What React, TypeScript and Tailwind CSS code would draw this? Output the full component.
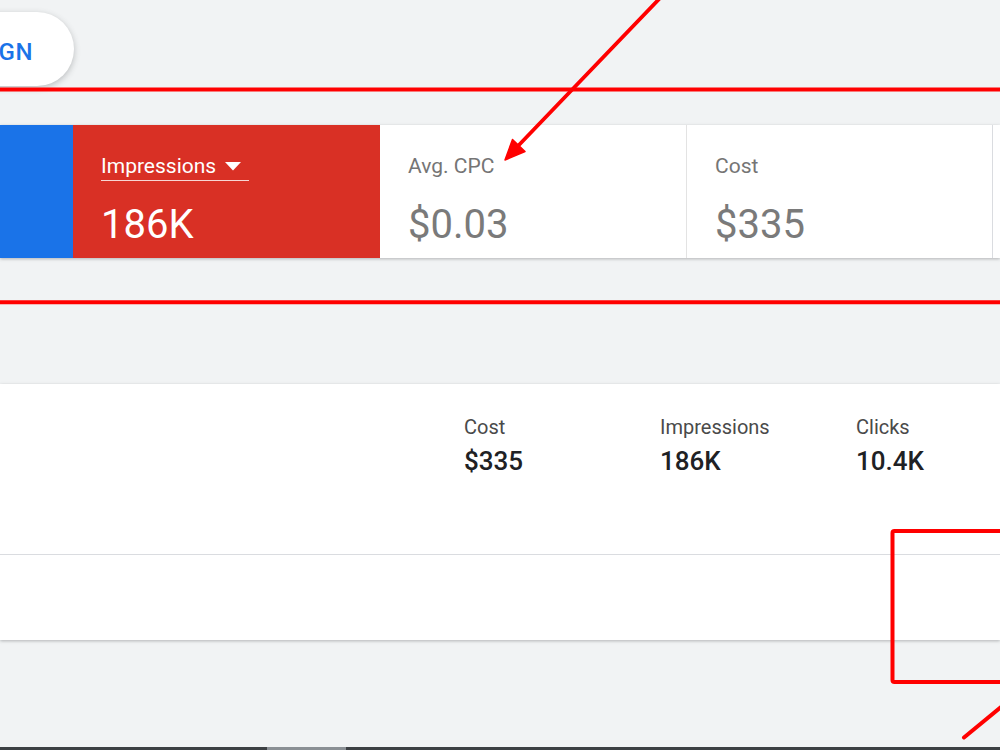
import React from "react";

function Annotations() {
  return (
    <svg
      className="absolute inset-0 pointer-events-none"
      width={1000}
      height={750}
      viewBox="0 0 1000 750"
    >
      <line x1={0} y1={89.5} x2={1000} y2={89.5} stroke="#ff0000" strokeWidth={4} />
      <line x1={0} y1={302.3} x2={1000} y2={302.3} stroke="#ff0000" strokeWidth={4} />
      <line x1={662} y1={-4} x2={518} y2={146} stroke="#ff0000" strokeWidth={3.8} strokeLinecap="round" />
      <polygon points="505,160 512.5,139.5 525,151.5" fill="#ff0000" stroke="#ff0000" strokeWidth={1.5} strokeLinejoin="round" />
      <rect x={892.5} y={531} width={200} height={151} rx={2} fill="none" stroke="#ff0000" strokeWidth={4} />
      <line x1={964} y1={737.5} x2={1012} y2={698} stroke="#ff0000" strokeWidth={4} strokeLinecap="round" />
    </svg>
  );
}

function Tile({
  label,
  value,
  className,
  labelClass,
  valueClass,
  underline,
}: {
  label: string;
  value: string;
  className: string;
  labelClass: string;
  valueClass: string;
  underline?: boolean;
}) {
  return (
    <div className={`shrink-0 pt-[27px] pl-[28px] ${className}`}>
      <div
        className={`inline-flex items-center text-[21px] leading-[28px] ${labelClass} ${
          underline ? "border-b border-white/80 w-[148px]" : "border-b border-transparent"
        }`}
      >
        <span>{label}</span>
        {underline && (
          <svg width={16} height={9} viewBox="0 0 16 9" className="ml-[9px] mt-[1px]">
            <polygon points="0,0 16,0 8,8.5" fill="#ffffff" />
          </svg>
        )}
      </div>
      <div className={`mt-[21px] text-[40px] leading-[46px] ${valueClass}`}>{value}</div>
    </div>
  );
}

function Stat({ label, value }: { label: string; value: string }) {
  return (
    <div className="w-[196px] shrink-0">
      <div className="text-[20px] leading-[24px] text-[#4a4a4a]">{label}</div>
      <div className="mt-[6px] text-[26px] leading-[32px] font-medium text-[#202124]">{value}</div>
    </div>
  );
}

export default function App() {
  return (
    <div
      className="relative w-[1000px] h-[750px] overflow-hidden bg-[#f1f3f4] flex flex-col"
      style={{ fontFamily: "Roboto, 'Liberation Sans', sans-serif" }}
    >
      <div className="pt-[12px] flex">
        <div className="-ml-[226px] w-[300px] h-[74px] rounded-full bg-white shadow-[0_2px_6px_rgba(60,64,67,0.3)] flex items-center justify-end pr-[41px]">
          <span className="text-[24px] font-medium text-[#1a73e8] tracking-[0.5px] whitespace-nowrap mt-[5px]">
            NEW CAMPAIGN
          </span>
        </div>
      </div>

      <div className="mt-[39px] h-[133px] flex bg-white shadow-[0_1px_3px_rgba(60,64,67,0.35)]">
        <div className="w-[73px] shrink-0 bg-[#1a73e8]" />
        <Tile
          label="Impressions"
          value="186K"
          className="w-[307px] bg-[#d93025]"
          labelClass="text-white"
          valueClass="text-white"
          underline
        />
        <Tile
          label="Avg. CPC"
          value="$0.03"
          className="w-[306px] bg-white"
          labelClass="text-[#757575]"
          valueClass="text-[#7a7a7a]"
        />
        <Tile
          label="Cost"
          value="$335"
          className="w-[306px] bg-white border-l border-[#e3e3e3]"
          labelClass="text-[#757575]"
          valueClass="text-[#7a7a7a]"
        />
        <div className="flex-1 bg-white border-l border-[#dadce0]" />
      </div>

      <div className="mt-[126px] h-[256px] bg-white shadow-[0_1px_3px_rgba(60,64,67,0.35)] flex flex-col">
        <div className="h-[171px] flex pl-[464px] pt-[31px] border-b border-[#dadce0]">
          <Stat label="Cost" value="$335" />
          <Stat label="Impressions" value="186K" />
          <Stat label="Clicks" value="10.4K" />
        </div>
        <div className="flex-1" />
      </div>

      <div className="flex-1" />
      <div className="h-[3px] bg-[#3c4043] flex">
        <div className="ml-[267px] w-[79px] bg-[#8a8f94]" />
      </div>

      <Annotations />
    </div>
  );
}
